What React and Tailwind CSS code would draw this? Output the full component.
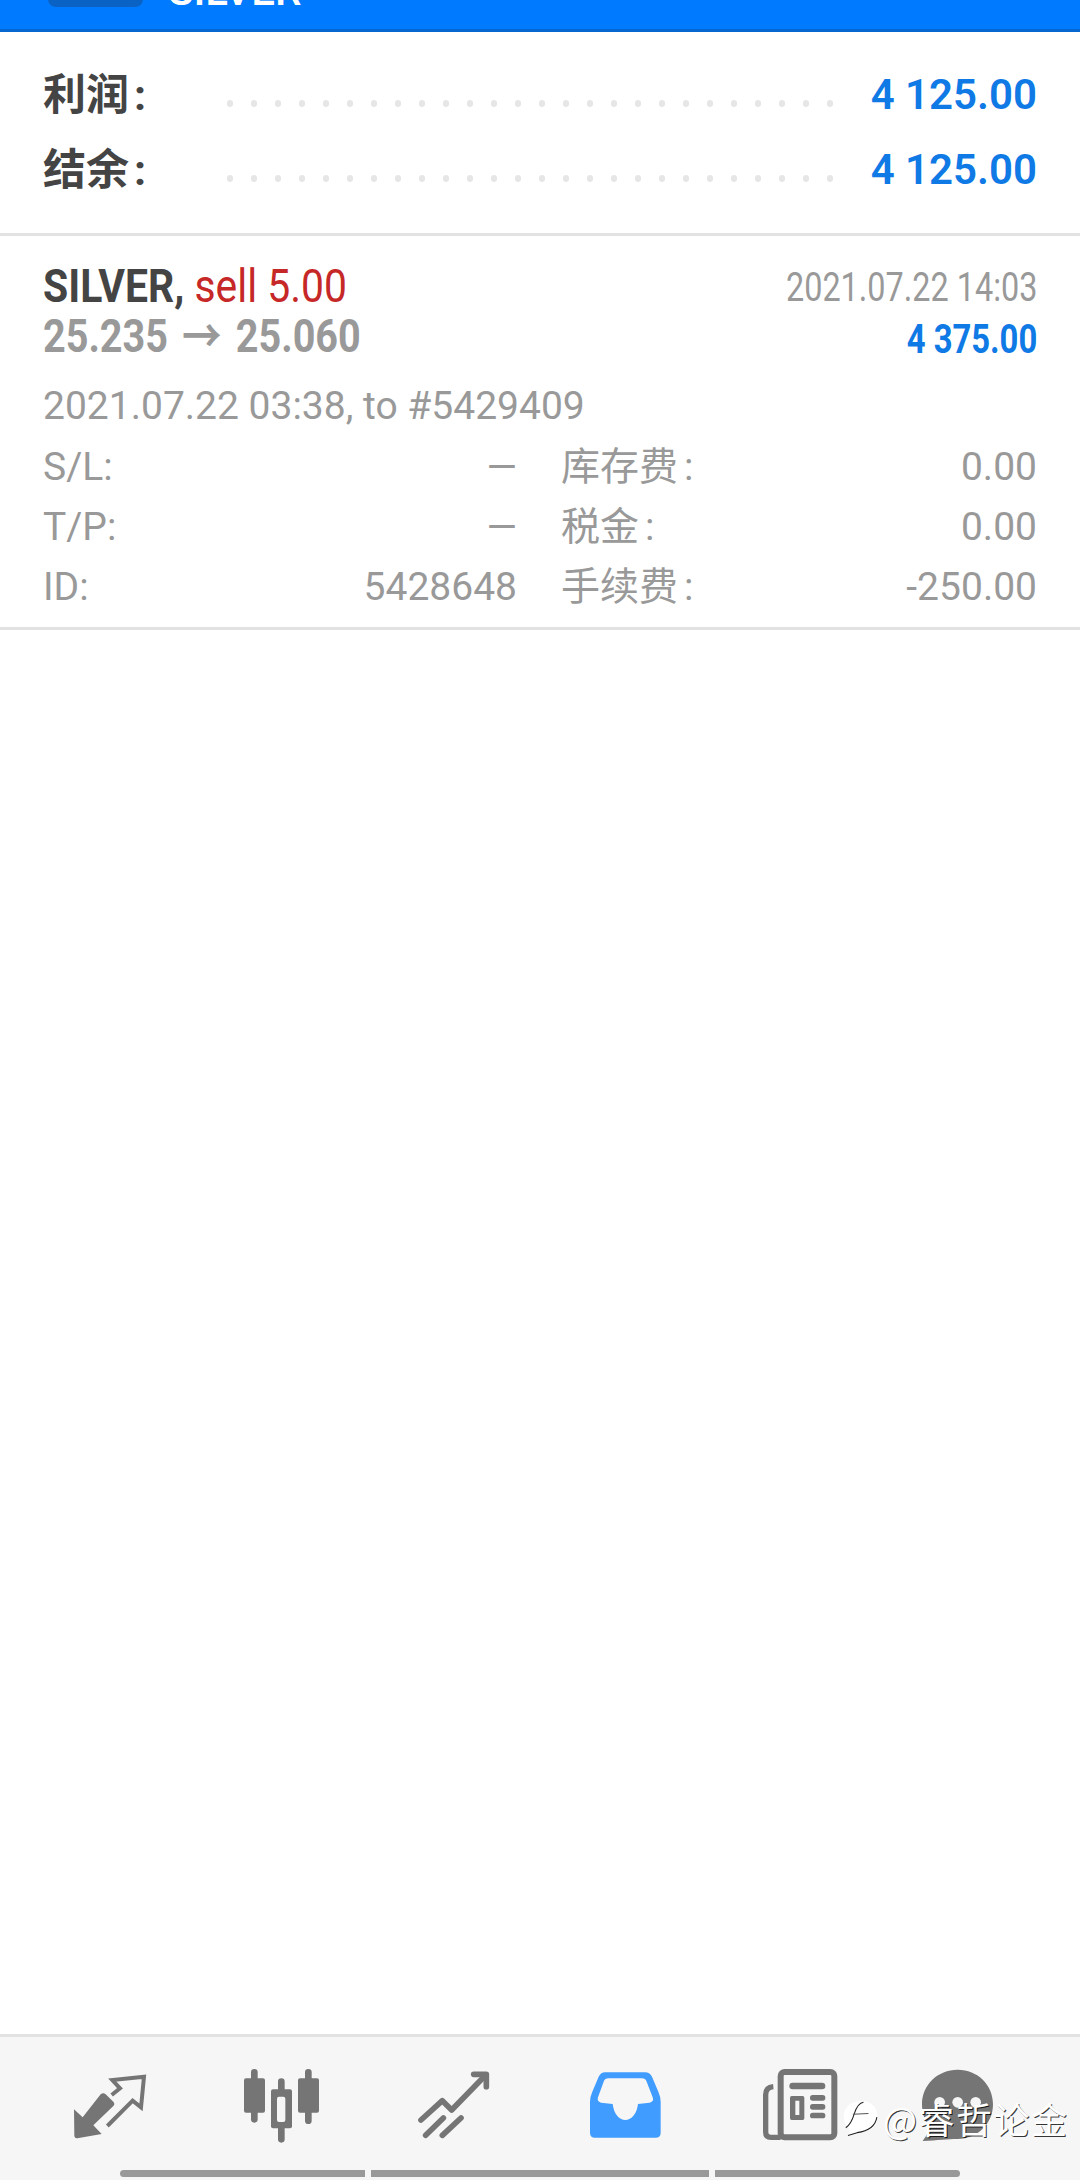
const details = [
  ["S/L:", "—", "库存费", "0.00"],
  ["T/P:", "—", "税金", "0.00"],
  ["ID:", "5428648", "手续费", "-250.00"],
];

const totals = [
  ["利润", "4 125.00"],
  ["结余", "4 125.00"],
];

const dots = Array.from({ length: 26 }, (_, i) => i);

function TradeIcon() {
  return (
    <svg viewBox="0 0 300 270" className="w-[100px] h-[90px]">
      <path d="M122 103 Q130 96 137 103 L160 125 Q166 132 160 138 L100 196 L125 222 L52 235 Q44 236 43 228 L42 148 L68 172 Z" fill="#757575" />
      <path d="M155 105 L180 85 L157 60 L252 50 L243 142 L218 122 L142 198" fill="none" stroke="#757575" strokeWidth="12" />
    </svg>
  );
}

function CandlesIcon() {
  return (
    <svg viewBox="0 0 300 270" className="w-[100px] h-[90px]" fill="#757575">
      <rect x="63" y="27" width="20" height="161" rx="10" />
      <rect x="42" y="55" width="63" height="103" rx="6" />
      <rect x="144" y="55" width="20" height="193" rx="10" />
      <rect x="123" y="88" width="63" height="117" rx="6" />
      <rect x="141" y="110" width="25" height="76" rx="6" fill="#f6f6f6" />
      <rect x="225" y="27" width="20" height="165" rx="10" />
      <rect x="204" y="55" width="63" height="103" rx="6" />
    </svg>
  );
}

function ChartIcon() {
  return (
    <svg viewBox="0 0 300 270" className="w-[100px] h-[90px]" fill="none" stroke="#757575" strokeWidth="17" strokeLinecap="round" strokeLinejoin="round">
      <path d="M48 180 L112 122 L140 150 L240 47" />
      <path d="M206 43 L244 43 L244 80" />
      <path d="M62 226 L115 174" />
      <path d="M112 226 L168 174" />
    </svg>
  );
}

function InboxIcon() {
  return (
    <svg viewBox="0 0 300 270" className="w-[100px] h-[90px]">
      <path
        fillRule="evenodd"
        fill="#409cff"
        d="M90 37 L210 37 Q224 37 231 50 L250 95 Q257 110 257 125 L257 218 Q257 233 242 233 L60 233 Q45 233 45 218 L45 125 Q45 110 52 95 L71 50 Q78 37 90 37 Z M100 55 Q90 55 86 65 L69 112 Q65 125 78 128 L113 132 C116 160 132 180 151 180 C170 180 186 160 189 132 L224 128 Q238 125 233 112 L215 65 Q211 55 201 55 Z"
      />
    </svg>
  );
}

function NewsIcon() {
  return (
    <svg viewBox="0 0 300 270" className="w-[100px] h-[90px]">
      <rect x="92" y="36" width="161" height="196" rx="12" fill="none" stroke="#757575" strokeWidth="18" />
      <path d="M70 80 Q47 82 47 104 L47 216 Q47 232 63 232 L92 232" fill="none" stroke="#757575" strokeWidth="16" />
      <rect x="118" y="68" width="108" height="20" rx="10" fill="#757575" />
      <path fillRule="evenodd" fill="#757575" d="M125 108 H158 Q163 108 163 113 V175 Q163 180 158 180 H125 Q120 180 120 175 V113 Q120 108 125 108 Z M136 122 V165 H148 V122 Z" />
      <rect x="180" y="105" width="46" height="17" rx="8" fill="#757575" />
      <rect x="180" y="132" width="46" height="17" rx="8" fill="#757575" />
      <rect x="180" y="158" width="46" height="17" rx="8" fill="#757575" />
    </svg>
  );
}

function ChatIcon() {
  return (
    <svg viewBox="0 0 219 219" className="w-[73px] h-[73px]" fill="#757575">
      <path d="M110 2 C170 2 216 48 216 106 C216 164 170 210 110 210 C80 210 50 214 5 216 C20 195 25 185 22 170 C10 152 3 130 3 106 C3 48 50 2 110 2 Z" />
      <circle cx="56" cy="100" r="16" fill="#f6f6f6" />
      <circle cx="110" cy="100" r="16" fill="#f6f6f6" />
      <circle cx="164" cy="100" r="16" fill="#f6f6f6" />
    </svg>
  );
}

function Watermark() {
  return (
    <div className="absolute left-[843px] top-[2098px] flex items-center">
      <svg viewBox="0 0 102 105" className="w-[36px] h-[38px]">
        <path d="M52 4 C80 4 98 22 98 48 C98 78 72 92 44 92 C32 98 22 102 12 103 C18 96 20 90 18 84 C8 74 2 62 2 48 C2 22 24 4 52 4 Z" fill="#ffffff" />
        <path d="M58 8 C44 10 38 22 32 40 C28 54 22 70 8 80" fill="none" stroke="#222222" strokeWidth="3" />
        <path d="M28 42 L72 40" fill="none" stroke="#555555" strokeWidth="3" />
        <path d="M96 50 C92 76 68 90 40 94 L14 102" fill="none" stroke="#222222" strokeWidth="3" />
      </svg>
      <span className="ml-[4px] text-[36px] leading-[40px] tracking-[1.5px] text-white font-['Noto_Sans_CJK_SC',sans-serif] [text-shadow:1px_1px_0_rgba(0,0,0,0.8)]">
        @睿哲论金
      </span>
    </div>
  );
}

export default function App() {
  return (
    <div className="relative flex flex-col h-[2180px] w-[1080px] overflow-hidden bg-white font-['Roboto','Noto_Sans_CJK_SC',sans-serif]">
      <header className="flex items-start shrink-0 h-[32px] overflow-hidden bg-[#007aff] border-b-[3px] border-[#0567cf]">
        <div className="ml-[48px] -mt-[33px] w-[95px] h-[40px] rounded-lg bg-[#0a63c4]" />
        <span className="ml-[25px] -mt-[29px] text-[42px] leading-[40px] font-medium text-white">SILVER</span>
      </header>

      <section className="shrink-0 pt-[25px] pb-[26px] border-b-[3px] border-[#e2e2e2]">
        {totals.map(([label, value], i) => (
          <div key={i} className="flex items-center h-[75px] px-[43px]">
            <span className="flex w-[184px] text-[43px] leading-[48px] font-bold text-[#444444]">
              {label}
              <span className="ml-[5px]">:</span>
            </span>
            <div className="flex justify-between w-[606px] mt-[18px]">
              {dots.map((d) => (
                <span key={d} className="w-[6px] h-[7px] rounded-full bg-[#e6e6e6]" />
              ))}
            </div>
            <span className="ml-auto text-[42px] leading-[48px] font-semibold text-[#0f7ae5]">{value}</span>
          </div>
        ))}
      </section>

      <section className="shrink-0 px-[43px] pt-[24px] pb-[10px] border-b-[3px] border-[#e2e2e2]">
        <div className="flex justify-between">
          <div className="flex flex-col items-start">
            <div className="text-[47px] leading-[52px] scale-x-[0.87] origin-left whitespace-nowrap">
              <span className="font-bold text-[#444444]">SILVER,</span>{" "}
              <span className="text-[#c62828]">sell 5.00</span>
            </div>
            <div className="-mt-[2px] text-[46px] leading-[52px] font-bold text-[#999999] scale-x-[0.86] origin-left whitespace-nowrap">
              25.235 <span className="inline-block mx-[5px]">→</span> 25.060
            </div>
          </div>
          <div className="flex flex-col items-end pt-[6px]">
            <div className="text-[40px] leading-[44px] text-[#999999] scale-x-[0.81] origin-right whitespace-nowrap">2021.07.22 14:03</div>
            <div className="mt-[8px] text-[40px] leading-[44px] font-bold text-[#0f7ae5] scale-x-[0.82] origin-right whitespace-nowrap">4 375.00</div>
          </div>
        </div>

        <div className="mt-[20px] text-[39px] leading-[48px] text-[#999999]">2021.07.22 03:38, to #5429409</div>

        <div className="mt-[7px] text-[39px] leading-[60px] text-[#999999]">
          {details.map(([a, b, c, d]) => (
            <div key={a} className="grid grid-cols-[474px_476px] gap-x-[44px] h-[60px]">
              <div className="flex justify-between">
                <span>{a}</span>
                <span>{b}</span>
              </div>
              <div className="flex justify-between">
                <span className="flex">
                  {c}
                  <span className="ml-[6px]">:</span>
                </span>
                <span>{d}</span>
              </div>
            </div>
          ))}
        </div>
      </section>

      <main className="flex-1 bg-white" />

      <nav className="shrink-0 h-[146px] bg-[#f6f6f6] border-t-[3px] border-[#e2e2e2]">
        <div className="flex items-start h-[90px] mt-[23px] pl-[60px]">
          <TradeIcon />
          <div className="ml-[70px]"><CandlesIcon /></div>
          <div className="ml-[75px]"><ChartIcon /></div>
          <div className="ml-[70px]"><InboxIcon /></div>
          <div className="ml-[75px]"><NewsIcon /></div>
          <div className="ml-[71px] mt-[9px]"><ChatIcon /></div>
        </div>
        <div className="flex gap-[6px] mt-[20px] ml-[120px]">
          <div className="w-[245px] h-[7px] bg-[#999999] rounded-l-full" />
          <div className="w-[338px] h-[7px] bg-[#999999]" />
          <div className="w-[245px] h-[7px] bg-[#999999] rounded-r-full" />
        </div>
      </nav>

      <Watermark />
    </div>
  );
}
